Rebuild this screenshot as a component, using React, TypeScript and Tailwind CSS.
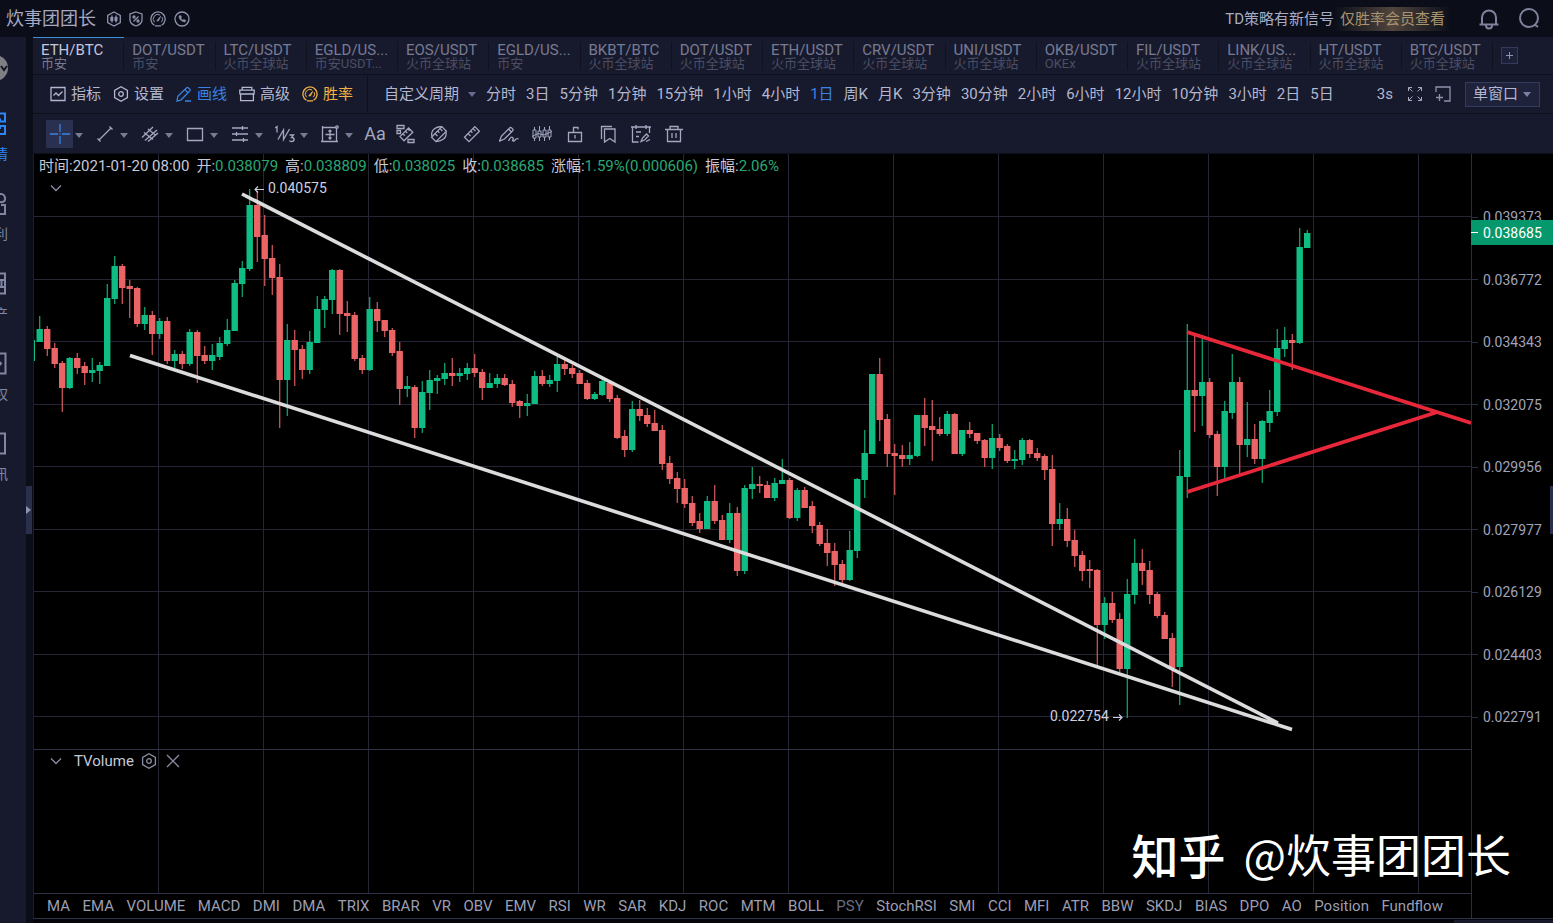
import React from "react";

type Candle = [up: number, high: number, top: number, bottom: number, low: number];

const TABS = [
  ["ETH/BTC", "币安"],
  ["DOT/USDT", "币安"],
  ["LTC/USDT", "火币全球站"],
  ["EGLD/US...", "币安USDT..."],
  ["EOS/USDT", "火币全球站"],
  ["EGLD/US...", "币安"],
  ["BKBT/BTC", "火币全球站"],
  ["DOT/USDT", "火币全球站"],
  ["ETH/USDT", "火币全球站"],
  ["CRV/USDT", "火币全球站"],
  ["UNI/USDT", "火币全球站"],
  ["OKB/USDT", "OKEx"],
  ["FIL/USDT", "火币全球站"],
  ["LINK/US...", "火币全球站"],
  ["HT/USDT", "火币全球站"],
  ["BTC/USDT", "火币全球站"],
];

const PERIODS = [
  "分时", "3日", "5分钟", "1分钟", "15分钟", "1小时", "4小时", "1日", "周K", "月K",
  "3分钟", "30分钟", "2小时", "6小时", "12小时", "10分钟", "3小时", "2日", "5日",
];

const INDICATORS = [
  "MA", "EMA", "VOLUME", "MACD", "DMI", "DMA", "TRIX", "BRAR", "VR", "OBV", "EMV", "RSI",
  "WR", "SAR", "KDJ", "ROC", "MTM", "BOLL", "PSY", "StochRSI", "SMI", "CCI", "MFI", "ATR",
  "BBW", "SKDJ", "BIAS", "DPO", "AO", "Position", "Fundflow",
];

const PRICES = [
  "0.039373", "0.036772", "0.034343", "0.032075", "0.029956",
  "0.027977", "0.026129", "0.024403", "0.022791",
];

const OHLC = [
  ["时间:", "2021-01-20 08:00"],
  ["开:", "0.038079"],
  ["高:", "0.038809"],
  ["低:", "0.038025"],
  ["收:", "0.038685"],
  ["涨幅:", "1.59%(0.000606)"],
  ["振幅:", "2.06%"],
];

const CANDLES: Candle[] = [
  [1, 316, 329, 342, 342], [0, 326, 329, 349, 356], [0, 343, 348, 364, 368], [0, 361, 363, 388, 412],
  [1, 357, 358, 388, 389], [0, 353, 358, 368, 374], [0, 362, 366, 373, 385], [1, 358, 370, 373, 382],
  [1, 362, 365, 371, 384], [1, 284, 298, 366, 366], [1, 256, 266, 299, 304], [0, 264, 266, 288, 304],
  [0, 280, 286, 289, 318], [0, 287, 288, 324, 327], [1, 307, 315, 324, 330], [0, 311, 315, 334, 355],
  [1, 318, 321, 334, 339], [0, 317, 321, 361, 364], [1, 350, 354, 361, 368], [0, 351, 354, 364, 369],
  [1, 329, 332, 364, 366], [0, 330, 332, 356, 383], [0, 346, 355, 361, 364], [1, 344, 355, 361, 370],
  [1, 337, 343, 357, 360], [1, 319, 330, 344, 346], [1, 280, 283, 331, 331], [1, 261, 268, 284, 297],
  [1, 189, 205, 269, 271], [0, 191, 205, 237, 262], [0, 215, 235, 259, 286], [0, 245, 258, 278, 295],
  [0, 264, 277, 380, 428], [1, 324, 340, 380, 416], [0, 330, 340, 350, 386], [0, 345, 349, 370, 379],
  [1, 331, 342, 370, 374], [1, 296, 309, 343, 343], [1, 296, 299, 310, 328], [1, 269, 270, 300, 314],
  [0, 269, 270, 314, 335], [0, 301, 313, 316, 332], [0, 312, 315, 359, 361], [0, 355, 358, 370, 374],
  [1, 297, 309, 370, 371], [0, 302, 309, 321, 332], [0, 320, 320, 331, 337], [0, 328, 330, 353, 356],
  [0, 342, 351, 389, 405], [1, 376, 386, 389, 397], [0, 385, 387, 428, 438], [1, 381, 392, 428, 433],
  [1, 370, 380, 393, 410], [1, 375, 378, 381, 394], [1, 363, 373, 379, 385], [0, 358, 373, 376, 386],
  [1, 368, 373, 376, 382], [1, 363, 368, 374, 380], [0, 354, 368, 373, 377], [0, 369, 372, 388, 400],
  [1, 373, 383, 388, 388], [1, 374, 378, 384, 388], [0, 374, 378, 385, 386], [0, 380, 384, 403, 407],
  [0, 400, 401, 406, 418], [1, 394, 403, 406, 416], [1, 371, 376, 404, 404], [0, 370, 376, 384, 386],
  [1, 375, 380, 384, 387], [1, 357, 364, 381, 392], [0, 359, 364, 369, 375], [0, 365, 368, 374, 378],
  [0, 370, 373, 384, 384], [0, 380, 383, 399, 400], [1, 392, 394, 399, 400], [1, 379, 381, 395, 396],
  [0, 382, 383, 399, 402], [0, 395, 398, 438, 439], [0, 430, 436, 450, 457], [1, 401, 409, 450, 452],
  [0, 400, 409, 416, 421], [0, 408, 415, 424, 427], [0, 410, 423, 431, 431], [0, 425, 430, 464, 470],
  [0, 456, 463, 479, 484], [0, 472, 478, 489, 503], [0, 479, 488, 504, 508], [0, 496, 503, 523, 526],
  [0, 513, 521, 529, 533], [1, 496, 501, 529, 529], [0, 485, 501, 521, 524], [0, 515, 520, 540, 540],
  [1, 503, 513, 540, 543], [0, 507, 513, 571, 576], [1, 485, 488, 571, 574], [1, 467, 484, 489, 499],
  [0, 476, 484, 486, 493], [0, 481, 485, 498, 498], [1, 478, 483, 498, 501], [1, 459, 480, 484, 484],
  [0, 478, 480, 518, 519], [1, 488, 490, 518, 521], [0, 487, 490, 508, 508], [0, 501, 506, 526, 533],
  [0, 522, 525, 544, 546], [0, 529, 543, 553, 566], [0, 543, 551, 565, 586], [0, 560, 564, 580, 584],
  [1, 531, 550, 580, 581], [1, 478, 479, 551, 558], [1, 430, 453, 480, 498], [1, 374, 374, 454, 454],
  [0, 358, 374, 420, 441], [0, 414, 419, 454, 467], [0, 444, 453, 456, 495], [0, 445, 455, 459, 467],
  [1, 442, 455, 459, 465], [1, 415, 415, 456, 457], [0, 398, 415, 428, 446], [0, 400, 426, 430, 461],
  [0, 417, 429, 434, 436], [1, 411, 414, 434, 436], [0, 413, 414, 454, 454], [1, 430, 430, 454, 456],
  [0, 422, 430, 434, 438], [0, 433, 433, 441, 444], [0, 439, 440, 458, 467], [1, 424, 438, 458, 469],
  [0, 434, 438, 448, 451], [0, 444, 446, 461, 463], [1, 450, 459, 461, 469], [1, 438, 440, 460, 465],
  [0, 439, 440, 454, 458], [0, 448, 453, 458, 461], [0, 454, 456, 470, 480], [0, 455, 469, 524, 546],
  [1, 503, 519, 524, 530], [0, 508, 519, 541, 547], [0, 530, 540, 556, 567], [0, 551, 555, 571, 581],
  [0, 560, 569, 571, 588], [0, 569, 570, 625, 666], [1, 597, 603, 625, 639], [0, 592, 603, 620, 623],
  [0, 613, 619, 669, 672], [1, 579, 594, 669, 718], [1, 539, 563, 595, 604], [0, 549, 563, 571, 585],
  [0, 561, 570, 595, 604], [0, 592, 594, 616, 618], [0, 612, 615, 639, 639], [0, 633, 638, 668, 687],
  [1, 450, 476, 667, 705], [1, 324, 390, 477, 498], [0, 336, 390, 396, 432], [1, 338, 382, 396, 426],
  [0, 378, 382, 435, 438], [0, 431, 434, 467, 496], [1, 401, 411, 467, 478], [1, 354, 382, 413, 419],
  [0, 377, 382, 445, 474], [1, 402, 439, 445, 457], [0, 424, 439, 459, 464], [1, 420, 421, 459, 483],
  [1, 390, 411, 423, 432], [1, 329, 348, 412, 416], [1, 327, 340, 349, 357], [0, 334, 340, 343, 370],
  [1, 228, 247, 343, 344], [1, 230, 233, 248, 248],
];

const GRID_X = Array.from({ length: 13 }, (_, i) => 158.5 + i * 105);
const GRID_Y = Array.from({ length: 9 }, (_, i) => Math.floor(216.9 + i * 62.5) + 0.5);

const Icon = ({
  size = 20,
  width = 1.3,
  className = "",
  children,
}: {
  size?: number;
  width?: number;
  className?: string;
  children: React.ReactNode;
}) => (
  <svg
    width={size}
    height={size}
    viewBox={`0 0 ${size} ${size}`}
    fill="none"
    stroke="currentColor"
    strokeWidth={width}
    className={`shrink-0 ${className}`}
    aria-hidden="true"
  >
    {children}
  </svg>
);

const Caret = ({ className = "" }: { className?: string }) => (
  <svg width="8" height="5" viewBox="0 0 8 5" className={`shrink-0 ${className}`} aria-hidden="true">
    <path d="M0 0h8L4 5z" fill="currentColor" />
  </svg>
);

const HexGear = () => (
  <Icon size={16}>
    <path d="M8 .8l6.4 3.6v7.2L8 15.2l-6.4-3.6V4.4z" />
    <circle cx="8" cy="8" r="2.3" />
  </Icon>
);

const Gauge = () => (
  <Icon size={16}>
    <path d="M4.5 14.2a7.100 7.100 0 1 1 7 0M5 14.900h6" />
    <path d="M4.600 11.200a4.600 4.600 0 0 1 5.600-7.200M12.200 6.200a4.600 4.600 0 0 1-.8 5" strokeWidth="1" />
    <path d="M6.800 9.800l3.800-4.400L8.400 10z" fill="currentColor" strokeWidth=".8" />
  </Icon>
);

const MENU = [
  {
    label: "指标",
    color: "text-[#b3b7d0]",
    icon: (
      <Icon size={16}>
        <path d="M1 1.5h14v13H1zM3.5 9.5l2.5-2.5 2.5 2.5 4-4" />
      </Icon>
    ),
  },
  { label: "设置", color: "text-[#b3b7d0]", icon: <HexGear /> },
  {
    label: "画线",
    color: "text-[#3b82e0]",
    icon: (
      <Icon size={16}>
        <path d="M1 15l.8-4.6L10.6 1.7q.8-.7 1.6 0l1.6 1.6q.7.8 0 1.6L5.2 13.8zM8.8 3.6l3.2 3.2M9 15h6" />
      </Icon>
    ),
  },
  {
    label: "高级",
    color: "text-[#b3b7d0]",
    icon: (
      <Icon size={16}>
        <path d="M.8 7.5V4.2h14.4v3.3M3.2 4V1.4h9.6V4M1.6 7.5v7.2h12.8V7.5M.4 8h15.2" />
      </Icon>
    ),
  },
  { label: "胜率", color: "text-[#f2b344]", icon: <Gauge /> },
];

// Drawing tools that open a sub menu
const DRAW_MENUS = [
  {
    name: "十字光标",
    icon: <path d="M10 0v8M10 12v8M0 10h8M12 10h8M9.5 10h1" />,
  },
  { name: "线段", icon: <path d="M4 16L16 4M2.5 14.5l3 3M14.5 2.5l3 3" /> },
  { name: "平行线", icon: <path d="M2 13.5L13 3M5 16.5L17 6M8 17.5L18 9M4 8.5l9 7M8 5l8 6.5" /> },
  { name: "矩形", icon: <path d="M2.5 4.5h15v12h-15z" /> },
  { name: "水平线", icon: <path d="M2 4h16M2 10h16M2 16h16M12.500 2v4M6.500 8v4M13.500 14v4" /> },
  {
    name: "波浪线",
    icon: (
      <>
        <path d="M0 4l2-1.500v6M3 15.500L8.500 6v9.500L14.500 5" />
        <path d="M14.500 11h4l-2 2.500q2.600 0 2.600 2t-2.600 2q-1.500 0-2.200-1" />
      </>
    ),
  },
  {
    name: "测量",
    icon: (
      <>
        <path d="M2.5 2v15.5H18M2.5 3.5H16M16.5 4v13.5M1 17.5h4M10 6v9M5.5 10.5h9M10 6L8.5 7.5M10 6l1.5 1.5M8.5 13.5L10 15l1.5-1.5" />
        <circle cx="17" cy="3" r="1.2" />
      </>
    ),
  },
];

const Ruler = () => (
  <path d="M2.5 13.2L12.8 2.6l4.6 4.6L7 17.7zM8.7 7l1.7 1.7M11 4.6l2.4 2.4M6 9.6L8.5 12" />
);

const SHAPE_TOOLS = [
  {
    name: "样式",
    icon: (
      <>
        <path d="M4 12.6L12.6 4l4.2 4.2L8 16.8zM9.5 7.2l1.8 1.8M7 9.8l1.8 1.8M12 5l1.8 1.8" />
        <path d="M1 1.5h7v3H1zM1 6.5h3.5v3H1zM12 15.5h6v3h-6z" />
      </>
    ),
  },
  {
    name: "橡皮擦",
    icon: (
      <>
        <Ruler />
        <path d="M2.800 12Q2 7.500 5.500 4.800T13 3M17 8q.8 4.500-2.500 7T7 17.500" />
      </>
    ),
  },
  { name: "标尺", icon: <Ruler /> },
];

const EDIT_TOOLS = [
  {
    name: "画笔",
    icon: (
      <path d="M.5 17L2.500 12l8.100-8.100q1-.8 2 0l1 1q.8 1 0 2L5.500 15zM9.500 5l3.200 3.200M9.500 17q2.500-5 4-3.500t0 3q.8 1.500 2.500-.5t3.500-1" />
    ),
  },
  {
    name: "K线",
    icon: (
      <path
        d="M2.500 3v3M2.500 14v3M1 6h3v8H1zM7.500 2v5M7.500 13v4M6 7h3v6H6zM12.500 3v3M12.500 13v4M11 6h3v7h-3zM17.500 2v4M17.500 13v3M16 6h3v7h-3zM0 12.500l6-3 6 1.500 8-3.500"
        strokeWidth="1"
      />
    ),
  },
  { name: "锁定", icon: <path d="M3.500 8.500h13v9h-13zM8.500 8.500v-5h4.500v2M10 11v3.500" /> },
  { name: "收藏", icon: <path d="M6.500 5h10.500v13l-5.200-3.500L6.500 18zM3.500 15V2.500H14" /> },
  {
    name: "计划",
    icon: (
      <path d="M0 3h20M1.500 3v15h6M5 1v4M15 1v4M18.500 3v6M5 8h5M5 12.500h3M10 17.500l1.500-3.500 4-4 2 2-4 4zM15 17.500l4-2" />
    ),
  },
  { name: "删除", icon: <path d="M1 5.500h18M6 5V2.500h8V5M3.500 5.500v12h13v-12M8 9v5M12 9v5" /> },
];

const SIDE = [
  { name: "行情", label: "情", color: "text-[#2f86f6]", d: "M10 1.500h11v8h-5v-3M10 22h11v-8h-5v3" },
  { name: "套利", label: "利", color: "text-[#8186a3]", d: "M12 3q8-3 9 2.500t-6 4.500M12 22h9v-9h-4" },
  { name: "资产", label: "产", color: "text-[#8186a3]", d: "M4 1.500h17v20H4M4 8h17M4 15h17M17.500 8v7" },
  { name: "期权", label: "权", color: "text-[#8186a3]", d: "M4 1.500h17.500v20H4M14 8.500l3 3-3 3" },
  { name: "资讯", label: "讯", color: "text-[#8186a3]", d: "M4 1.500h17v20H4" },
];

const Header = () => (
  <header className="flex h-[37px] items-center bg-[#0b0e19] pl-1.5 text-[#8f93ad]">
    <h1 className="mr-2.5 text-lg leading-5 text-[#a4a8c2]">炊事团团长</h1>
    <div className="flex items-center gap-1.5">
      <Icon size={16}>
        <path d="M8 1l6.300 3.500v7L8 15l-6.300-3.500v-7z" />
        <path d="M6 4.500v7M10 4.500v7" />
        <path d="M5.800 6v4M10 6v4" strokeWidth="3" />
      </Icon>
      <Icon size={16}>
        <path d="M8 1l6 2v6q0 4-6 6-6-2-6-6V3zM5.500 10.500l5-5" />
        <circle cx="6" cy="6" r="1" />
        <circle cx="10" cy="10" r="1" />
      </Icon>
      <Gauge />
      <Icon size={16} className="ml-0.5">
        <circle cx="8" cy="8" r="7" />
        <path d="M5 5q0 5 6 6l.8-1.500-2-1-1 .7Q7 8.500 6.800 7l.8-.8-1-1.700z" fill="currentColor" strokeWidth=".6" />
      </Icon>
    </div>
    <p className="ml-auto text-[15px] leading-5 text-[#a7abc4]">TD策略有新信号</p>
    <a
      href="#"
      className="mr-[26px] bg-linear-to-r from-[#0b0e19] via-[#51453d] to-[#0b0e19] px-1.5 py-0.5 text-[15px] leading-5 text-[#a8946e]"
    >
      仅胜率会员查看
    </a>
    <button type="button" aria-label="通知" className="mr-4">
      <Icon size={24} width={2} className="text-[#7e829c]">
        <path d="M2.500 17.500h19M5 17v-6.500a7 7 0 0 1 14 0V17M9 18.500q0 3 3 3t3-3" />
      </Icon>
    </button>
    <button type="button" aria-label="搜索" className="mr-3">
      <Icon size={24} width={2} className="text-[#7e829c]">
        <circle cx="12" cy="11" r="9" />
        <path d="M17.500 17.500l3.500 2.500" />
      </Icon>
    </button>
  </header>
);

const SideNav = () => (
  <nav className="w-[26px] shrink-0 overflow-hidden bg-[#171a2c] pt-[18px]">
    <div className="flex h-[26px] w-2 justify-end overflow-hidden">
      <Icon size={26} width={2} className="text-[#15161d]">
        <circle cx="13" cy="13" r="13" fill="#7d7f84" stroke="none" />
        <path d="M19 11l3 4 3-4" />
      </Icon>
    </div>
    <ul className="mt-[31px] flex flex-col gap-7">
      {SIDE.map((item) => (
        <li key={item.name} className={`w-2 ${item.color}`}>
          <a href="#" aria-label={item.name} className="flex flex-col items-end overflow-hidden">
            <Icon size={24} width={2}>
              <path d={item.d} />
            </Icon>
            <span className="mt-2 text-sm leading-5">{item.label}</span>
          </a>
        </li>
      ))}
    </ul>
  </nav>
);

const PairTabs = () => (
  <div className="flex h-[38px] border-b border-[#0d0f1b]">
    {TABS.map(([pair, market], i) => (
      <button
        type="button"
        key={i}
        className={`flex min-w-0 flex-1 flex-col border-t pt-1 text-left ${
          i === 0 ? "border-[#3d8fd6] text-[#c3c6de]" : "border-transparent text-[#777b94]"
        }`}
      >
        <span className="block w-full border-r border-[#10121f] pl-2 whitespace-nowrap">
          <span className="block text-[15px] leading-4">{pair}</span>
          <span className={`block text-[13px] leading-3 ${i === 0 ? "text-[#777b94]" : "text-[#4b4e65]"}`}>
            {market}
          </span>
        </span>
      </button>
    ))}
    <div className="flex w-[60px] items-center pl-2">
      <button
        type="button"
        aria-label="添加"
        className="flex size-[17px] items-center justify-center border border-[#353a5c] bg-[#1c2038] text-[#8e93b4]"
      >
        <Icon size={9} width={1}>
          <path d="M4.500 1v7M1 4.500h7" />
        </Icon>
      </button>
    </div>
  </div>
);

const PeriodBar = () => (
  <div className="flex h-[39px] items-center border-b border-[#0d0f1b] text-[15px] leading-5 whitespace-nowrap text-[#b3b7d0]">
    <div className="flex gap-3 pl-[17px]">
      {MENU.map((m) => (
        <button type="button" key={m.label} className={`flex items-center gap-[5px] ${m.color}`}>
          {m.icon}
          {m.label}
        </button>
      ))}
    </div>
    <span className="mr-4 ml-3.5 h-9 w-px bg-[#0d0f1b]" />
    <label className="relative mr-2.5 flex items-center">
      <select aria-label="自定义周期" className="w-[92px] appearance-none bg-transparent">
        <option>自定义周期</option>
      </select>
      <Caret className="pointer-events-none absolute right-0 text-[#666a92]" />
    </label>
    <div className="flex gap-2.5">
      {PERIODS.map((p) => (
        <button type="button" key={p} className={p === "1日" ? "text-[#3b82e0]" : ""}>
          {p}
        </button>
      ))}
    </div>
    <div className="ml-auto flex items-center pr-[13px]">
      <span className="mr-3.5">3s</span>
      <button type="button" aria-label="全屏" className="mr-3">
        <Icon size={16} width={1} className="text-[#a3a7c0]">
          <path d="M1.500 5V1.500H5M1.500 1.500L5.500 5.500M11 1.500h3.500V5M14.500 1.500l-4 4M1.500 11v3.500H5M1.500 14.500l4-4M14.500 11v3.500H11M14.500 14.500l-4-4" />
        </Icon>
      </button>
      <button type="button" aria-label="新窗口" className="mr-3.5">
        <Icon size={16} className="text-[#8e92ac]">
          <path d="M1 6V1h14v14H9M1 11.500h7M4.500 8v7" />
        </Icon>
      </button>
      <label className="relative flex h-[25px] w-[75px] items-center border border-[#363b5e] bg-[#1e223b]">
        <select aria-label="窗口布局" className="w-full appearance-none bg-transparent pl-[7px]">
          <option>单窗口</option>
        </select>
        <Caret className="pointer-events-none absolute right-2 text-[#7b7fa0]" />
      </label>
    </div>
  </div>
);

const DrawBar = () => (
  <div className="flex h-10 items-center border-b border-[#0d0f1b] pl-[13px] text-[#a3a7c0]">
    {DRAW_MENUS.map((tool, i) => (
      <React.Fragment key={tool.name}>
        <button
          type="button"
          aria-label={tool.name}
          className={`flex h-7 w-[27px] items-center justify-center ${i === 0 ? "bg-[#2a3050] text-[#3b82e0]" : ""}`}
        >
          <Icon>{tool.icon}</Icon>
        </button>
        <button type="button" aria-label={`${tool.name}选项`} className="h-7 w-[18px] pt-1 pl-0.5">
          <Caret className="text-[#777b94]" />
        </button>
      </React.Fragment>
    ))}
    <div className="flex items-center gap-1">
      <div className="flex items-center">
        <button type="button" className="w-7 text-lg leading-5">
          Aa
        </button>
        {SHAPE_TOOLS.map((tool) => (
          <button type="button" key={tool.name} aria-label={tool.name} className="flex w-[33px] justify-center">
            <Icon>{tool.icon}</Icon>
          </button>
        ))}
      </div>
      <div className="flex items-center">
        {EDIT_TOOLS.map((tool) => (
          <button type="button" key={tool.name} aria-label={tool.name} className="flex w-[33px] justify-center">
            <Icon>{tool.icon}</Icon>
          </button>
        ))}
      </div>
    </div>
  </div>
);

const PriceChart = () => (
  <svg
    viewBox="34 154 1437 595"
    preserveAspectRatio="xMinYMin slice"
    className="block h-[595px] w-full"
    role="img"
    aria-label="ETH/BTC 日线"
  >
    <g stroke="#242636">
      {GRID_X.map((x) => (
        <line key={x} x1={x} x2={x} y1="154" y2="749" />
      ))}
      {GRID_Y.map((y) => (
        <line key={y} x1="34" x2="1471" y1={y} y2={y} />
      ))}
    </g>
    <path d="M34.500 340v21" stroke="#0fbd84" />
    {CANDLES.map(([up, high, top, bottom, low], i) => {
      const x = 39.7 + i * 7.5;
      const color = up ? "#0fbd84" : "#ea6466";
      return (
        <g key={i} fill={color}>
          <rect x={x - 0.5} y={high} width="1.100" height={low - high} />
          <rect x={x - 3.2} y={top} width="6.400" height={bottom - top} />
        </g>
      );
    })}
    <g stroke="#dcdcdc" strokeWidth="3.600">
      <path d="M242 194l1036 529M130 355.500L1292 729.500" />
    </g>
    <path d="M1187 332l284 91M1187 492l249-79.500" stroke="#e8283a" strokeWidth="3.600" />
    <g fill="#cdd0e0" fontSize="14">
      <text x="268" y="193">0.040575</text>
      <text x="1050" y="721">0.022754</text>
    </g>
    <path
      d="M264 189.500h-9m3-3l-3 3 3 3M1113 717.500h9m-3-3l3 3-3 3"
      stroke="#cdd0e0"
      strokeWidth="1.200"
      fill="none"
    />
  </svg>
);

const Chevron = () => (
  <Icon size={12}>
    <path d="M1 3.500l5 5 5-5" />
  </Icon>
);

const PriceAxis = () => (
  <div className="relative w-[82px] shrink-0 border-l border-[#2b2e42] bg-black">
    <ul className="flex h-[573px] flex-col justify-between pt-[53px] text-sm leading-5 text-[#a1a4b8]">
      {PRICES.map((p) => (
        <li key={p} className="flex items-center gap-[5px]">
          <span className="h-px w-1.5 bg-[#2b2e42]" />
          {p}
        </li>
      ))}
    </ul>
    <div className="absolute top-[66px] right-0 -left-px flex h-[25px] items-center gap-[5px] bg-[#05986c] text-sm text-white">
      <span className="h-px w-[7px] bg-white" />
      0.038685
    </div>
  </div>
);

const App = () => {
  return (
    <div
      lang="zh-CN"
      className="relative flex min-h-screen flex-col overflow-hidden bg-[#0b0e19] font-['Roboto','Noto_Sans_CJK_SC',sans-serif]"
    >
      <Header />
      <div className="flex flex-1">
        <SideNav />
        <div className="flex w-[7px] shrink-0 flex-col">
          <button
            type="button"
            aria-label="展开侧栏"
            className="mt-[449px] flex h-12 w-1.5 items-center bg-[#2a2f4a] text-[#8e92ac]"
          >
            <svg width="5" height="8" viewBox="0 0 5 8" aria-hidden="true">
              <path d="M0 0v8l5-4z" fill="currentColor" />
            </svg>
          </button>
        </div>
        <main className="flex min-w-0 flex-1 flex-col">
          <div className="bg-[#171a2c]">
            <PairTabs />
            <PeriodBar />
            <DrawBar />
          </div>
          <div className="flex flex-1 border-l border-[#1c1e2e] bg-black">
            <div className="flex min-w-0 flex-1 flex-col">
              {/* price pane */}
              <section className="relative">
                <PriceChart />
                <dl className="absolute top-0.5 left-[5px] flex gap-[7px] text-[15px] leading-5 whitespace-nowrap text-[#c6c9da]">
                  {OHLC.map(([name, value], i) => (
                    <div key={name} className="flex">
                      <dt>{name}</dt>
                      <dd className={i === 0 ? "" : "text-[#2aa876]"}>{value}</dd>
                    </div>
                  ))}
                </dl>
                <button type="button" aria-label="收起" className="absolute top-7 left-4 text-[#8b8ea3]">
                  <Chevron />
                </button>
              </section>
              {/* volume pane */}
              <section className="relative flex-1 border-t border-[#2f3145]">
                <svg
                  viewBox="34 0 1437 143"
                  preserveAspectRatio="xMinYMin slice"
                  className="block h-[143px] w-full"
                  aria-hidden="true"
                >
                  {GRID_X.map((x) => (
                    <line key={x} x1={x} x2={x} y1="0" y2="143" stroke="#242636" />
                  ))}
                </svg>
                <div className="absolute top-px left-4 flex items-center text-[#8b8ea3]">
                  <button type="button" aria-label="收起">
                    <Chevron />
                  </button>
                  <h2 className="mr-[7px] ml-3 text-[15px] leading-5 text-[#c6c9da]">TVolume</h2>
                  <button type="button" aria-label="指标设置" className="mr-2">
                    <HexGear />
                  </button>
                  <button type="button" aria-label="关闭">
                    <Icon size={16}>
                      <path d="M2 2l12 12M14 2L2 14" />
                    </Icon>
                  </button>
                </div>
              </section>
              <div className="flex h-[25px] items-center justify-between border-t border-[#2f3145] pr-7 pl-[13px] text-[15px] leading-5 text-[#9b9eb4]">
                {INDICATORS.map((name) => (
                  <button type="button" key={name} className={name === "PSY" ? "text-[#6a6d83]" : ""}>
                    {name}
                  </button>
                ))}
              </div>
            </div>
            <PriceAxis />
          </div>
          <footer className="flex h-[5px] justify-end border-t border-[#2f3145] bg-[#05060c] pt-px">
            <div className="h-full w-[99px] bg-[#171a2c]" />
          </footer>
        </main>
      </div>
      <div className="absolute top-[486px] right-0 h-12 w-[3px] bg-[#2a2f4a]" />
      <div className="pointer-events-none absolute right-[42px] bottom-[35px] flex items-center gap-[18px] font-['Noto_Sans_CJK_SC',sans-serif] text-[45px] leading-[68px] text-white">
        <span className="text-[47px] font-medium">知乎</span>
        <span>@炊事团团长</span>
      </div>
    </div>
  );
};

export default App;
